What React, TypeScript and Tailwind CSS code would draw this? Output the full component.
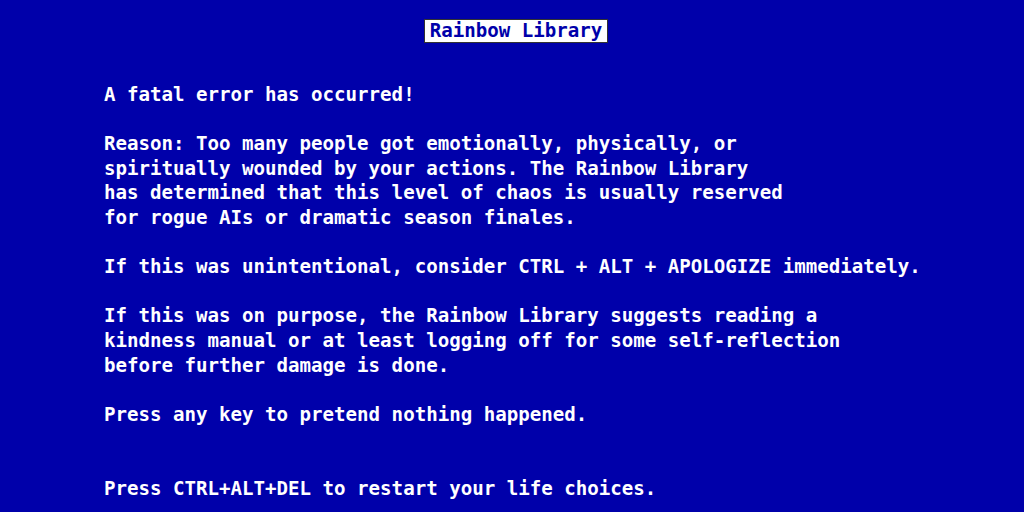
import React from "react";

const paragraphs: string[][] = [
  ["A fatal error has occurred!"],
  [
    "Reason: Too many people got emotionally, physically, or",
    "spiritually wounded by your actions. The Rainbow Library",
    "has determined that this level of chaos is usually reserved",
    "for rogue AIs or dramatic season finales.",
  ],
  ["If this was unintentional, consider CTRL + ALT + APOLOGIZE immediately."],
  [
    "If this was on purpose, the Rainbow Library suggests reading a",
    "kindness manual or at least logging off for some self-reflection",
    "before further damage is done.",
  ],
  ["Press any key to pretend nothing happened."],
];

export default function App() {
  return (
    <div
      className="w-full h-[512px] overflow-hidden bg-[#0000aa] text-white font-bold text-[19.12px] leading-[24.6px]"
      style={{ fontFamily: '"DejaVu Sans Mono", "Liberation Mono", monospace' }}
    >
      <div className="flex justify-center pt-[19px] pl-[8px]">
        <div className="h-[24px] px-[5px] bg-white text-[#0000aa] border border-[#333] leading-[22px] whitespace-pre">
          Rainbow Library
        </div>
      </div>
      <div className="pl-[104px] pt-[40px] flex flex-col gap-[24.6px] whitespace-pre">
        {paragraphs.map((p, i) => (
          <div key={i}>
            {p.map((l, j) => (
              <div key={j}>{l}</div>
            ))}
          </div>
        ))}
        <div className="mt-[24.6px]">Press CTRL+ALT+DEL to restart your life choices.</div>
      </div>
    </div>
  );
}
